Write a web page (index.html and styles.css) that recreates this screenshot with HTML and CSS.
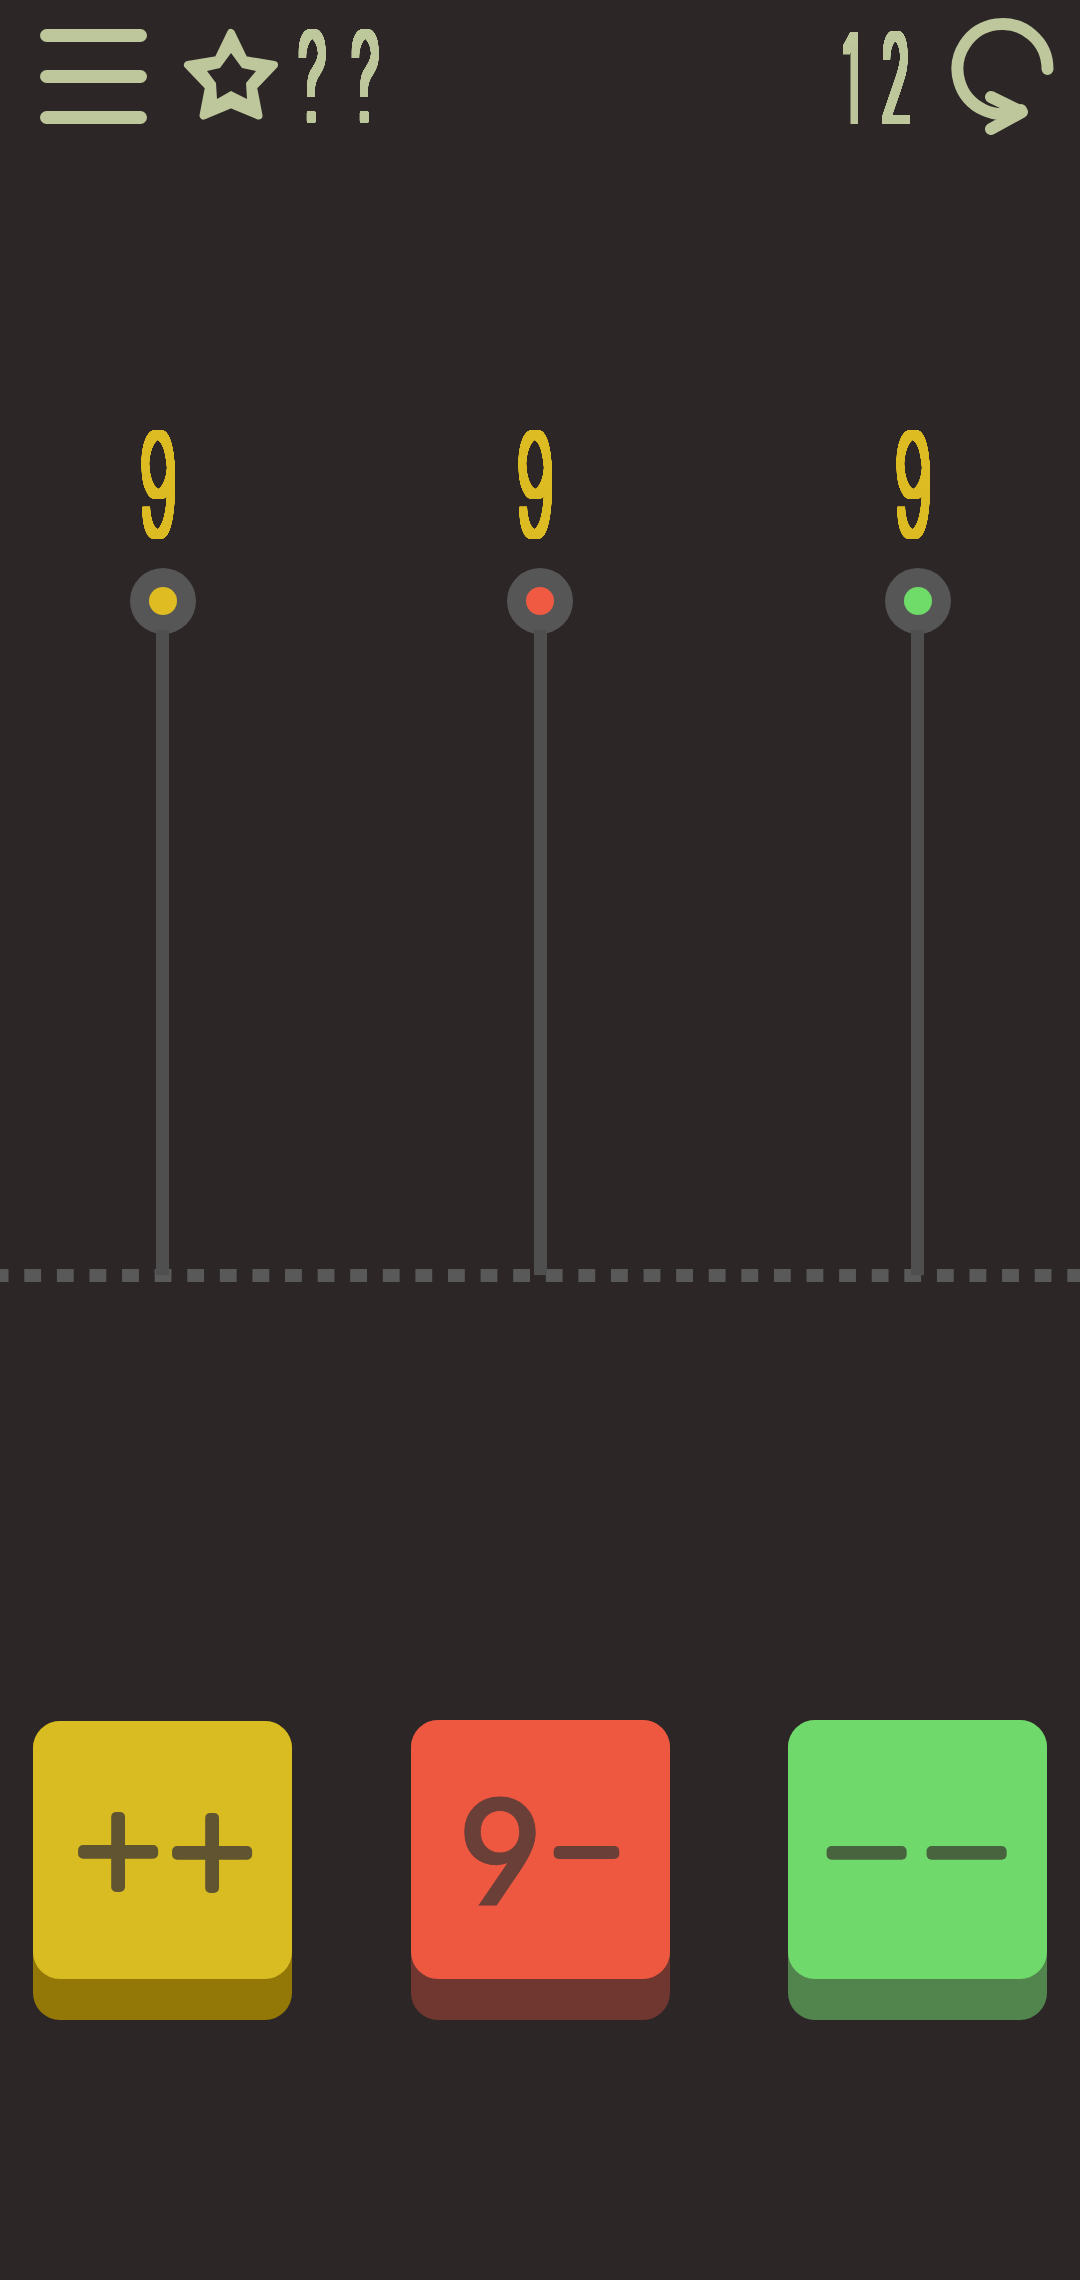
FILE: index.html
```html
<!DOCTYPE html>
<html lang="en">
<head>
<meta charset="utf-8">
<title>Puzzle</title>
<link rel="stylesheet" href="styles.css">
</head>
<body>
<svg class="defs" width="0" height="0" aria-hidden="true"><defs><filter id="fat" x="-40%" y="-10%" width="180%" height="120%" color-interpolation-filters="sRGB"><feComponentTransfer><feFuncA type="linear" slope="3"/></feComponentTransfer><feMorphology operator="dilate" radius="2.500 2.500"/><feGaussianBlur stdDeviation="0.4"/></filter></defs></svg>
<main class="page">
  <header class="topbar">
    <div class="menu"><span></span><span></span><span></span></div>
    <svg class="star" viewBox="184 29 94 91"><path class="star-edge" d="M231 33 L244 60 L274 65 L253 87 L258.500 115.500 L231 104 L203.500 115.500 L209 87 L188 65 L218 60 Z"/><path class="star-hole" d="M231 53 L242 68 L256 71 L246 83 L247 99 L231 91 L217 99 L216 83 L207 71 L220 68 Z"/></svg>
    <svg class="best" viewBox="0 0 82 93"><g filter="url(#fat)"><text class="thin" transform="scale(.55 1.18)" x="26.400 122.700" y="77">??</text></g></svg>
    <svg class="moves" viewBox="0 0 67 93"><g filter="url(#fat)"><text class="thin" transform="scale(.48 1.18)" x="17.700 110.400" y="77">12</text></g></svg>
    <svg class="reload" viewBox="951 18 103 117"><path d="M1047.500 69 A45 45 0 1 0 1021 110 M991 97 L1022 112 L991 129"/></svg>
  </header>

  <section class="tracks">
    <div class="track yellow"><svg class="digit" viewBox="0 0 34 110"><g filter="url(#fat)"><text class="thin" transform="scale(.65 1.38)" x="26.500" y="76">9</text></g></svg><div class="knob"><i></i></div><div class="stem"></div></div>
    <div class="track red"><svg class="digit" viewBox="0 0 34 110"><g filter="url(#fat)"><text class="thin" transform="scale(.65 1.38)" x="26.500" y="76">9</text></g></svg><div class="knob"><i></i></div><div class="stem"></div></div>
    <div class="track green"><svg class="digit" viewBox="0 0 34 110"><g filter="url(#fat)"><text class="thin" transform="scale(.65 1.38)" x="26.500" y="76">9</text></g></svg><div class="knob"><i></i></div><div class="stem"></div></div>
  </section>
  <div class="dashes"></div>

  <section class="keys">
    <button class="key yellow"><svg viewBox="0 0 259 258"><text class="op" x="85 179" y="179 180">++</text></svg></button>
    <button class="key red"><svg viewBox="0 0 259 259"><text class="nine" x="89" y="185">9</text><text class="op small" x="175.500" y="171">−</text></svg></button>
    <button class="key green"><svg viewBox="0 0 259 259"><text class="op" x="78.500 178.500" y="181">−−</text></svg></button>
  </section>
</main>
</body>
</html>
```
FILE: styles.css
```css
* { box-sizing: border-box; }
html, body { margin: 0; background: #2c2627; }
.defs { position: absolute; }
.page { width: 1080px; height: 2280px; overflow: hidden; display: flex; flex-direction: column; background: #2c2627; }

.topbar { height: 140px; display: flex; align-items: flex-start; padding: 18px 26px 0 40px; }
.menu { width: 107px; height: 95px; margin-top: 11px; display: flex; flex-direction: column; justify-content: space-between; }
.menu span { height: 13px; border-radius: 7px; background: #bdc79b; }
.star { width: 94px; height: 91px; margin: 11px 0 0 37px; overflow: visible; }
.star-edge { fill: #bdc79b; stroke: #bdc79b; stroke-width: 8; stroke-linejoin: round; }
.star-hole { fill: #2c2627; }
.best { width: 82px; height: 93px; margin: 10px 0 0 20px; overflow: visible; }
.moves { width: 67px; height: 93px; margin: 12px 0 0 auto; overflow: visible; }
.reload { width: 103px; height: 117px; margin-left: 41px; overflow: visible; }
.reload path { fill: none; stroke: #bdc79b; stroke-width: 12; stroke-linecap: round; stroke-linejoin: round; }

.thin { font-family: "Inter", "Liberation Sans", sans-serif; font-weight: 100; font-size: 100px; text-anchor: middle; fill: #bdc79b; }

.tracks { display: flex; justify-content: space-between; padding: 290px 33px 0; }
.track { width: 259px; display: flex; flex-direction: column; align-items: center; }
.digit { width: 34px; height: 110px; margin: 0 10px 28px 0; overflow: visible; }
.digit .thin { fill: #dcbb22; }
.knob { width: 66px; height: 66px; border-radius: 50%; background: #565656; display: flex; align-items: center; justify-content: center; }
.knob i { width: 28px; height: 28px; border-radius: 50%; }
.yellow .knob i { background: #dfbd22; }
.red .knob i { background: #f05a43; }
.green .knob i { background: #6fdc6a; }
.stem { width: 13px; height: 645px; margin-top: -4px; background: #4f4f4f; position: relative; z-index: 1; }

.dashes { height: 13px; margin-top: -6px; background: linear-gradient(90deg, #595959 16.3px, transparent 16.3px) -8.3px 0 / 32.6px 100%; }

.keys { display: flex; justify-content: space-between; align-items: flex-start; padding: 438px 33px 0; }
.key { width: 259px; height: 300px; padding: 0; border: 0; border-radius: 27px; display: flex; align-items: flex-start; }
.key svg { display: block; width: 259px; height: 259px; border-radius: 27px; }
.key.yellow { height: 299px; margin-top: 1px; background: #937808; }
.key.yellow svg { height: 258px; background: #d9bc21; }
.key.yellow text { fill: #605530; stroke: #605530; }
.key.red { background: #6f372f; }
.key.red svg { background: #ee5840; }
.key.red text { fill: #693f38; stroke: #693f38; }
.key.green { background: #52854d; }
.key.green svg { background: #70d96c; }
.key.green text { fill: #47643f; stroke: #47643f; }
.op { font-family: "Inter", "Liberation Sans", sans-serif; font-weight: 100; font-size: 170px; text-anchor: middle; stroke-width: 10px; stroke-linejoin: round; }
.op.small { font-size: 135px; }
.nine { font-family: "Inter", "Liberation Sans", sans-serif; font-feature-settings: "cv04", "ss01"; font-weight: 500; font-size: 146px; text-anchor: middle; stroke-width: 1px; }
```
